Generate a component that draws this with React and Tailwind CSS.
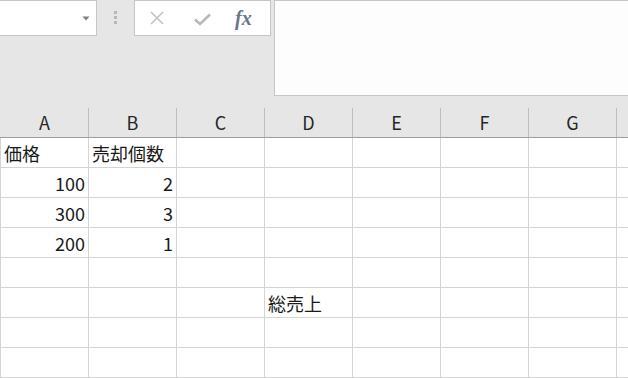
import React from 'react';

const COLS = ['A', 'B', 'C', 'D', 'E', 'F', 'G', 'H'];

const ROWS = [
  { A: '価格', B: '売却個数' },
  { A: '100', B: '2', num: true },
  { A: '300', B: '3', num: true },
  { A: '200', B: '1', num: true },
  {},
  { D: '総売上' },
  {},
  {},
];

const font = { fontFamily: '"Noto Sans CJK JP", "Noto Sans", sans-serif' };

const Dots = () => (
  <div className="flex flex-col gap-[2px] ml-[17px] mt-[11px]">
    <div className="w-[3px] h-[3px] bg-[#b2bab2]" />
    <div className="w-[3px] h-[3px] bg-[#b2bab2]" />
    <div className="w-[3px] h-[3px] bg-[#b2bab2]" />
  </div>
);

const App = () => {
  return (
    <div
      className="w-[628px] h-[378px] bg-[#e6e6e6] overflow-hidden text-[#1a1a1a]"
      style={font}
    >
      {/* Top: name box, buttons, formula bar */}
      <div className="flex h-[108px]">
        <div className="w-[97px] h-[36px] bg-white border border-l-0 border-[#c6c6c6] flex items-center justify-end pr-[6px]">
          <svg width="8" height="5" viewBox="0 0 8 5">
            <path d="M0.5 0.5 H7.5 L4 4.5 Z" fill="#7f7f7f" />
          </svg>
        </div>
        <div className="w-[37px]">
          <Dots />
        </div>
        <div className="w-[137px] h-[36px] bg-white border border-[#c6c6c6] flex items-center">
          <svg width="14" height="14" viewBox="0 0 14 14" className="ml-[15px]">
            <path d="M1 1 L13 13 M13 1 L1 13" stroke="#c2c2c2" strokeWidth="1.6" fill="none" />
          </svg>
          <svg width="17" height="13" viewBox="0 0 17 13" className="ml-[30px] mt-[2px]">
            <path d="M1 6.5 L6 11 L16 1.5" stroke="#b9b9b9" strokeWidth="2.6" fill="none" />
          </svg>
          <span
            className="ml-[24px] italic font-bold text-[20px] leading-none text-[#66768a] -mt-[1px]"
            style={{ fontFamily: '"Liberation Serif", "DejaVu Serif", serif' }}
          >
            fx
          </span>
        </div>
        <div className="w-[3px]" />
        <div className="flex-1 h-[96px] bg-[#fdfdfd] border border-r-0 border-[#c6c6c6]" />
      </div>

      {/* Column headers */}
      <div className="flex h-[30px] border-b border-[#9e9e9e] pl-px">
        {COLS.map((c) => (
          <div
            key={c}
            className="w-[88px] shrink-0 border-r border-[#bdbdbd] flex items-center justify-center text-[18px] text-[#262626]"
          >
            {c === 'H' ? '' : c}
          </div>
        ))}
      </div>

      {/* Cells */}
      <div className="bg-white border-l border-[#d4d4d4]">
        {ROWS.map((row, i) => (
          <div key={i} className="flex h-[30px] border-b border-[#d4d4d4]">
            {COLS.map((c) => (
              <div
                key={c}
                className={`w-[88px] shrink-0 border-r border-[#d4d4d4] flex items-center text-[18px] leading-none whitespace-nowrap ${
                  row.num ? 'justify-end pr-[3px]' : 'justify-start pl-[3px]'
                }`}
              >
                {row[c] || ''}
              </div>
            ))}
          </div>
        ))}
      </div>
    </div>
  );
};

export default App;
